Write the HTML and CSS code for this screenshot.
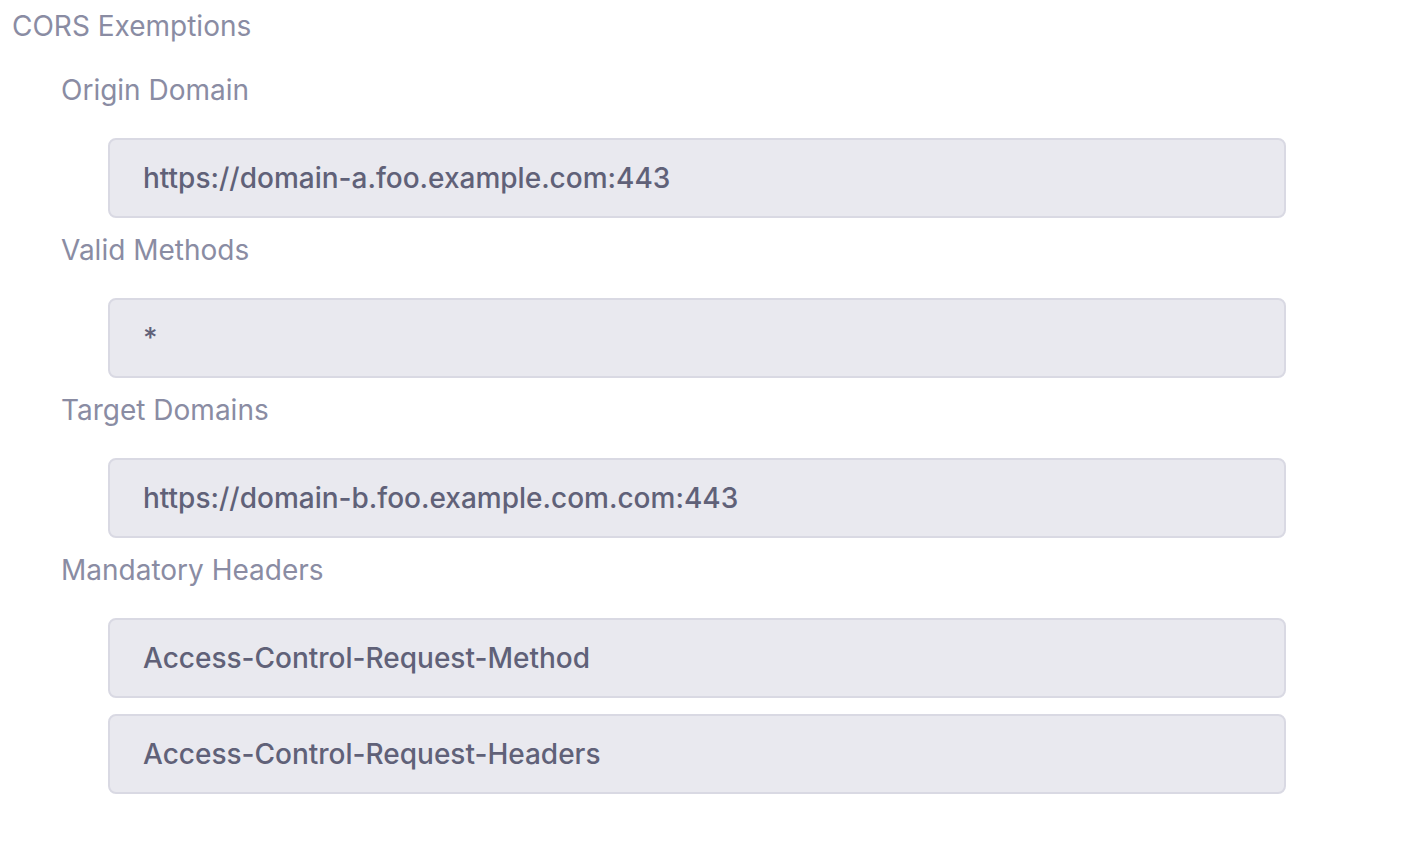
FILE: index.html
```html
<!DOCTYPE html>
<html lang="en">
<head>
  <meta charset="UTF-8">
  <title>CORS Exemptions</title>
  <meta name="viewport" content="width=device-width, initial-scale=1.0">
  <link rel="stylesheet" href="styles.css">
</head>
<body>

  <div class="section">
    <div class="section-title">CORS Exemptions</div>

    <div class="fields">
      <div class="field">
        <div class="field-label">Origin Domain</div>
        <div class="values">
          <div class="value">https://domain-a.foo.example.com:443</div>
        </div>
      </div>

      <div class="field">
        <div class="field-label">Valid Methods</div>
        <div class="values">
          <div class="value">*</div>
        </div>
      </div>

      <div class="field">
        <div class="field-label">Target Domains</div>
        <div class="values">
          <div class="value">https://domain-b.foo.example.com.com:443</div>
        </div>
      </div>

      <div class="field">
        <div class="field-label">Mandatory Headers</div>
        <div class="values">
          <div class="value">Access-Control-Request-Method</div>
          <div class="value">Access-Control-Request-Headers</div>
        </div>
      </div>
    </div>
  </div>

</body>
</html>
```

FILE: styles.css
```css
body {
  margin: 0;
  background-color: #fff;
  font-family: Inter, "Noto Sans", sans-serif;
  color: #8a8ca3;
}

.section {
  padding: 6px 0 0 12px;
}

.section-title {
  font-size: 28px;
  line-height: 40px;
}

.fields {
  padding-left: 49px;
  margin-top: 24px;
}

.field-label {
  font-size: 28px;
  line-height: 40px;
}

.values {
  display: flex;
  flex-direction: column;
  gap: 16px;
  margin: 28px 0 12px 47px;
  width: 1178px;
}

.value {
  box-sizing: border-box;
  height: 80px;
  padding: 0 33px;
  display: flex;
  align-items: center;
  background-color: #e9e9ef;
  border: 2px solid #d9d9e3;
  border-radius: 8px;
  color: #606178;
  font-size: 28px;
  font-weight: 500;
}
```
